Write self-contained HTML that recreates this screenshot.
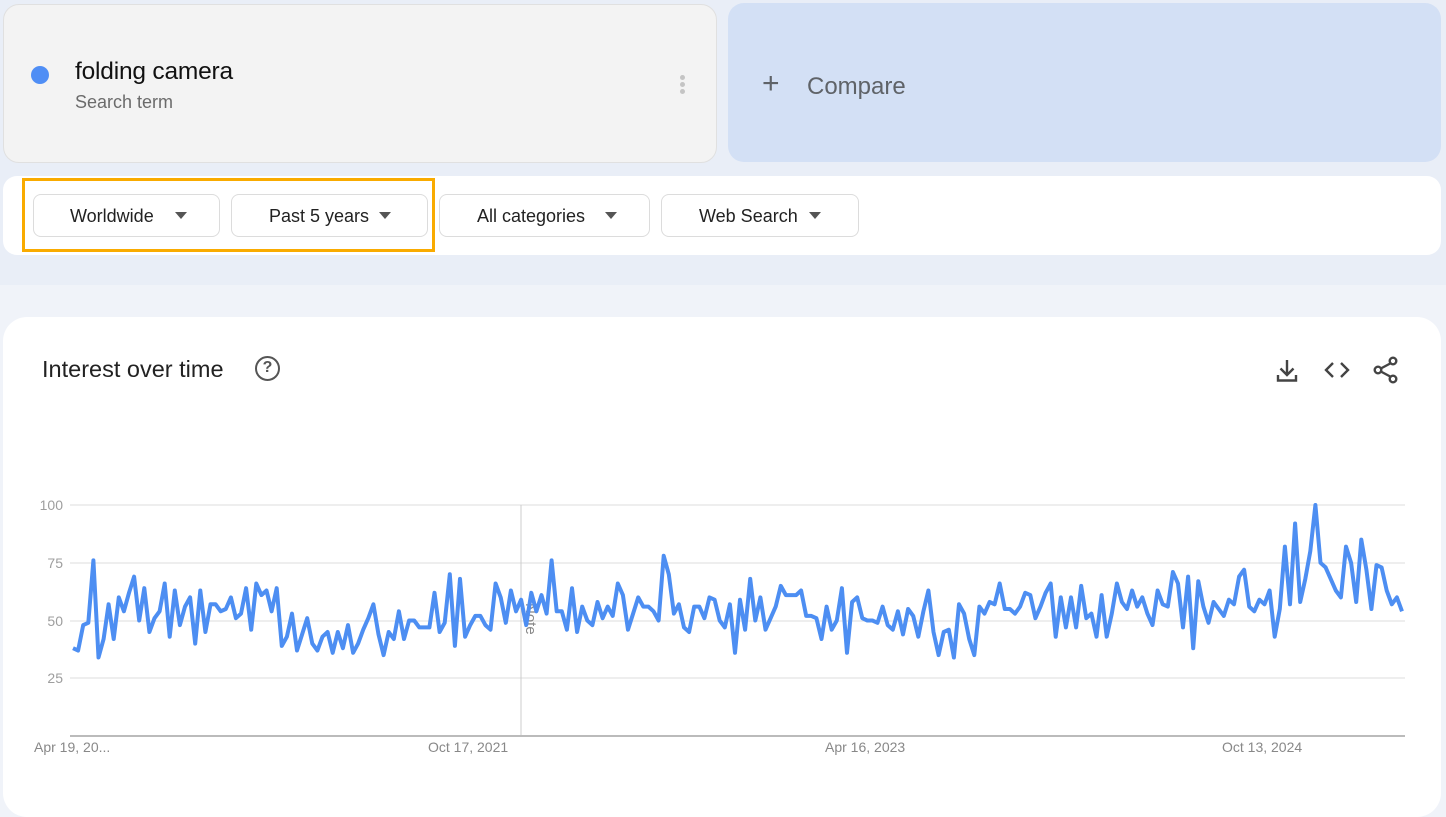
<!DOCTYPE html>
<html><head><meta charset="utf-8"><style>
*{box-sizing:border-box;margin:0;padding:0}
body{width:1446px;height:808px;overflow:hidden;background:#f0f3f9;font-family:"Liberation Sans",Arial,sans-serif;position:relative}
.band{position:absolute;left:0;top:0;width:1446px;height:285px;background:#e9eef7}
.term{position:absolute;left:3px;top:4px;width:714px;height:159px;background:#f3f3f3;border:1px solid #e0e0e0;border-radius:16px}
.dot{position:absolute;left:27px;top:61px;width:18px;height:18px;border-radius:50%;background:#4f8ef5}
.t1{position:absolute;left:71px;top:53px;font-size:24.5px;color:#111;letter-spacing:-0.2px}
.t2{position:absolute;left:71px;top:87px;font-size:18px;color:#6b6b6b}
.kebab{position:absolute;left:676px;top:70px;width:5px}
.kebab i{display:block;width:5px;height:5px;border-radius:50%;background:#c4c4c4;margin-bottom:2px}
.cmp{position:absolute;left:728px;top:3px;width:713px;height:159px;background:#d3e0f5;border-radius:16px}
.cmp span{position:absolute;left:79px;top:70px;font-size:24px;color:#5f6368}
.cmp b{position:absolute;left:34px;top:64px;font-size:30px;font-weight:normal;color:#5f6368}
.filters{position:absolute;left:3px;top:176px;width:1438px;height:79px;background:#fff;border-radius:14px}
.orange{position:absolute;left:22px;top:178px;width:413px;height:74px;border:3px solid #f9ab00}
.btn{position:absolute;top:194px;height:43px;border:1px solid #dcdcdc;border-radius:8px;background:#fff;font-size:18px;color:#222;line-height:43px}
.btn s{position:absolute;top:17px;width:0;height:0;border-left:6px solid transparent;border-right:6px solid transparent;border-top:7px solid #555;text-decoration:none}
.card{position:absolute;left:3px;top:317px;width:1438px;height:500px;background:#fff;border-radius:24px}
.title{position:absolute;left:42px;top:356px;font-size:23.5px;color:#222}
.help{position:absolute;left:255px;top:356px;width:25px;height:25px;border:2.5px solid #555;border-radius:50%;font-size:16px;font-weight:bold;color:#555;text-align:center;line-height:20px}
.yl{position:absolute;font-size:14px;color:#9e9e9e;text-align:right;width:30px;left:33px}
.xl{position:absolute;top:739px;font-size:14px;color:#888}
</style></head><body>
<div class="band"></div>
<div class="term"><div class="dot"></div><div class="t1">folding camera</div><div class="t2">Search term</div><div class="kebab"><i></i><i></i><i></i></div></div>
<div class="cmp"><b>+</b><span>Compare</span></div>
<div class="filters"></div>
<div class="btn" style="left:33px;width:187px"><span style="position:absolute;left:36px">Worldwide</span><s style="left:141px"></s></div>
<div class="btn" style="left:231px;width:197px"><span style="position:absolute;left:37px">Past 5 years</span><s style="left:147px"></s></div>
<div class="btn" style="left:439px;width:211px"><span style="position:absolute;left:37px">All categories</span><s style="left:165px"></s></div>
<div class="btn" style="left:661px;width:198px"><span style="position:absolute;left:37px">Web Search</span><s style="left:147px"></s></div>
<div class="orange"></div>
<div class="card"></div>
<div class="title">Interest over time</div>
<div class="help">?</div>
<svg style="position:absolute;left:1274px;top:356px" width="130" height="30" viewBox="0 0 130 30">
<g fill="none" stroke="#444" stroke-width="2.4">
<path d="M13 4v15M6.5 12.5l6.5 6.5 6.5-6.5M4 19v5.5h18v-5.5"/>
<path d="M59 7l-7 7 7 7M67 7l7 7-7 7"/>
<path d="M104 14l15-8M104 14l15 8"/>
<circle cx="104" cy="14" r="3.3" fill="#fff"/><circle cx="119" cy="5" r="3.3" fill="#fff"/><circle cx="119" cy="23" r="3.3" fill="#fff"/>
</g></svg>
<div class="yl" style="top:497px">100</div>
<div class="yl" style="top:555px">75</div>
<div class="yl" style="top:613px">50</div>
<div class="yl" style="top:670px">25</div>
<svg id="ch" style="position:absolute;left:0;top:0" width="1446" height="808">
<g stroke="#e3e3e3" stroke-width="1.2"><line x1="70" x2="1405" y1="505" y2="505"/><line x1="70" x2="1405" y1="563" y2="563"/><line x1="70" x2="1405" y1="621" y2="621"/><line x1="70" x2="1405" y1="678" y2="678"/></g>
<line x1="521" x2="521" y1="505" y2="736" stroke="#ccc" stroke-width="1"/>
<line x1="70" x2="1405" y1="736" y2="736" stroke="#bbb" stroke-width="2"/>
<text x="0" y="0" transform="translate(526,603) rotate(90)" font-family="Liberation Sans,sans-serif" font-size="15" fill="#888">Note</text>
<polyline id="pl" fill="none" stroke="#4d8ef2" stroke-width="4" stroke-linejoin="round" points=""/>
</svg>
<div class="xl" style="left:34px">Apr 19, 20...</div>
<div class="xl" style="left:428px">Oct 17, 2021</div>
<div class="xl" style="left:825px">Apr 16, 2023</div>
<div class="xl" style="left:1222px">Oct 13, 2024</div>
<script>
var v=[38,37,48,49,76,34,42,57,42,60,54,62,69,50,64,45,51,54,66,43,63,48,56,60,40,63,45,57,57,54,55,60,51,53,64,46,66,61,63,54,64,39,43,53,37,44,51,40,37,43,45,36,45,38,48,36,40,46,51,57,44,35,45,42,54,42,50,50,47,47,47,62,45,49,70,39,68,43,48,52,52,48,46,66,60,49,63,54,59,48,62,54,61,53,76,54,54,46,64,45,56,50,48,58,51,56,52,66,61,46,53,60,56,56,54,50,78,70,53,57,47,45,56,56,51,60,59,50,47,57,36,59,46,68,50,60,46,51,56,65,61,61,61,63,52,52,51,42,56,46,50,64,36,58,60,51,50,50,49,56,48,46,54,44,55,52,43,54,63,45,35,45,46,34,57,53,42,35,56,53,58,57,66,55,55,53,56,62,61,51,56,62,66,43,60,47,60,47,65,51,53,43,61,43,53,66,58,55,63,56,60,53,48,63,57,56,71,66,47,69,38,67,56,49,58,55,52,59,57,69,72,56,54,59,57,63,43,55,82,57,92,58,68,80,100,75,73,68,63,60,82,75,58,85,72,55,74,73,63,57,60,54];
var x0=73,x1=1402,p=[];for(var i=0;i<v.length;i++){p.push((x0+(x1-x0)*i/(v.length-1)).toFixed(1)+","+(736-2.31*v[i]).toFixed(1));}
document.getElementById("pl").setAttribute("points",p.join(" "));
</script>
</body></html>
